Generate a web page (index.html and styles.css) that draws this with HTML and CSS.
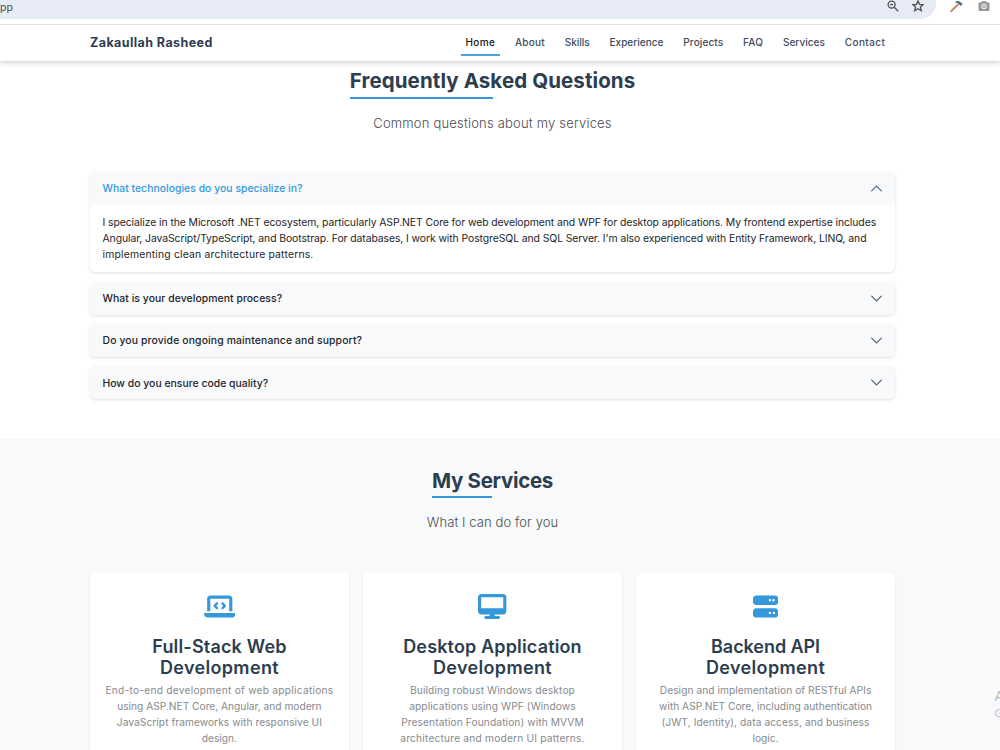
FILE: index.html
```
<!DOCTYPE html>
<html lang="en">
<head>
<meta charset="utf-8">
<title>Zakaullah Rasheed</title>
<link rel="stylesheet" href="styles.css">
</head>
<body>
<div class="browser">
  <div class="address"><span class="url">pp</span>
    <svg class="zoom" viewBox="0 0 12 12"><circle cx="4.6" cy="4.6" r="3.5"/><path d="M7.3 7.3 11.2 11.2M3 4.6h3.2"/></svg>
    <svg class="star" viewBox="0 0 12 12"><path d="M6 .9 7.5 4.3 11.2 4.6 8.4 7 9.3 10.7 6 8.7 2.7 10.7 3.6 7 .8 4.6 4.5 4.3Z"/></svg>
  </div>
  <svg class="hammer" viewBox="0 0 13 13"><path class="handle" d="M1.2 11.2 7.6 4.8"/><path class="head" d="M4.8 2.3C6.4.5 9 .5 10.4 1.9l1 1 1.5.6-2 2.6-1.2-.9L7.7 3.5C6.9 2.8 6.2 2.5 4.8 2.3Z"/></svg>
  <svg class="camera" viewBox="0 0 12 12"><path d="M1.3 2.4h1.9L4.1 1h3.8l.9 1.4h1.9q.8 0 .8.8v6.9q0 .8-.8.8H1.3q-.8 0-.8-.8V3.2q0-.8.8-.8Z"/><circle class="ring" cx="6" cy="6.4" r="2.3"/><circle class="lens" cx="6" cy="6.4" r=".8"/></svg>
</div>
<nav class="navbar">
  <div class="container nav-row">
    <a class="brand">Zakaullah Rasheed</a>
    <div class="links">
      <a class="link active n-home">Home</a><a class="link n-about">About</a><a class="link">Skills</a><a class="link n-exp">Experience</a><a class="link n-proj">Projects</a><a class="link n-faq">FAQ</a><a class="link n-serv">Services</a><a class="link n-contact">Contact</a>
    </div>
  </div>
</nav>
<section class="faq">
  <div class="container">
    <div class="section-head">
      <h2 class="h-faq">Frequently Asked Questions</h2>
      <p class="sub-faq">Common questions about my services</p>
    </div>
    <div class="accordion">
      <div class="item">
        <div class="question open"><span class="q1">What technologies do you specialize in?</span><svg class="chevron" viewBox="0 0 16 16"><path d="M2 11 8 5l6 6"/></svg></div>
        <div class="answer"><span class="line a1">I specialize in the Microsoft .NET ecosystem, particularly ASP.NET Core for web development and WPF for desktop applications. My frontend expertise includes</span> <span class="line a2">Angular, JavaScript/TypeScript, and Bootstrap. For databases, I work with PostgreSQL and SQL Server. I'm also experienced with Entity Framework, LINQ, and</span> <span class="line a3">implementing clean architecture patterns.</span></div>
      </div>
      <div class="item"><div class="question"><span class="q2">What is your development process?</span><svg class="chevron" viewBox="0 0 16 16"><path d="M2 5l6 6 6-6"/></svg></div></div>
      <div class="item"><div class="question"><span class="q3">Do you provide ongoing maintenance and support?</span><svg class="chevron" viewBox="0 0 16 16"><path d="M2 5l6 6 6-6"/></svg></div></div>
      <div class="item"><div class="question"><span class="q4">How do you ensure code quality?</span><svg class="chevron" viewBox="0 0 16 16"><path d="M2 5l6 6 6-6"/></svg></div></div>
    </div>
  </div>
</section>
<section class="services">
  <div class="container">
    <div class="section-head">
      <h2 class="h-serv">My Services</h2>
      <p class="sub-serv">What I can do for you</p>
    </div>
    <div class="cards">
      <div class="card">
        <svg class="icon" viewBox="0 0 640 512" width="31.5" height="25.2"><path d="M64 96c0-35.3 28.7-64 64-64H512c35.3 0 64 28.7 64 64V352H512V96H128V352H64V96zM0 403.2C0 392.6 8.6 384 19.2 384H620.8c10.6 0 19.2 8.6 19.2 19.2c0 42.4-34.4 76.8-76.8 76.8H76.8C34.4 480 0 445.6 0 403.2zM281 209l-31 31 31 31c9.4 9.4 9.4 24.6 0 33.9s-24.6 9.4-33.9 0l-48-48c-9.4-9.4-9.4-24.6 0-33.9l48-48c9.4-9.4 24.6-9.4 33.9 0s9.4 24.6 0 33.9zM393 175l48 48c9.4 9.4 9.4 24.6 0 33.9l-48 48c-9.4 9.4-24.6 9.4-33.9 0s-9.4-24.6 0-33.9l31-31-31-31c-9.4-9.4-9.4-24.6 0-33.9s24.6-9.4 33.9 0z"/></svg>
        <h3><span class="line t1">Full-Stack Web</span> <span class="line t2">Development</span></h3>
        <p><span class="line c1">End-to-end development of web applications</span> <span class="line">using ASP.NET Core, Angular, and modern</span> <span class="line c3">JavaScript frameworks with responsive UI</span> <span class="line">design.</span></p>
      </div>
      <div class="card">
        <svg class="icon" viewBox="0 0 576 512" width="28.4" height="25.2"><path d="M64 0C28.7 0 0 28.7 0 64V352c0 35.3 28.7 64 64 64H240l-10.7 32H160c-17.7 0-32 14.3-32 32s14.3 32 32 32H416c17.7 0 32-14.3 32-32s-14.3-32-32-32H346.7L336 416H512c35.3 0 64-28.7 64-64V64c0-35.3-28.7-64-64-64H64zM512 64V288H64V64H512z"/></svg>
        <h3><span class="line t3">Desktop Application</span> <span class="line t2">Development</span></h3>
        <p><span class="line c4">Building robust Windows desktop</span> <span class="line c5">applications using WPF (Windows</span> <span class="line c5">Presentation Foundation) with MVVM</span> <span class="line c6">architecture and modern UI patterns.</span></p>
      </div>
      <div class="card">
        <svg class="icon" viewBox="0 0 512 512" width="25.2" height="25.2"><path fill-rule="evenodd" d="M64 32C28.7 32 0 60.7 0 96v64c0 35.3 28.7 64 64 64H448c35.3 0 64-28.7 64-64V96c0-35.3-28.7-64-64-64H64zm280 72a24 24 0 1 1 0 48 24 24 0 1 1 0-48zm48 24a24 24 0 1 1 48 0 24 24 0 1 1 -48 0zM64 288c-35.3 0-64 28.7-64 64v64c0 35.3 28.7 64 64 64H448c35.3 0 64-28.7 64-64V352c0-35.3-28.7-64-64-64H64zm280 72a24 24 0 1 1 0 48 24 24 0 1 1 0-48zm56 24a24 24 0 1 1 48 0 24 24 0 1 1 -48 0z"/></svg>
        <h3><span class="line t4">Backend API</span> <span class="line t2">Development</span></h3>
        <p><span class="line c3">Design and implementation of RESTful APIs</span> <span class="line">with ASP.NET Core, including authentication</span> <span class="line c7">(JWT, Identity), data access, and business</span> <span class="line">logic.</span></p>
      </div>
    </div>
  </div>
</section>
<div class="watermark"><div class="mark-title">A</div><div class="mark-text">G</div></div>
</body>
</html>
```
FILE: styles.css
```
* { box-sizing: border-box; }
body { margin: 0; height: 750px; overflow: hidden; position: relative; background: #fff; color: #212529; font-family: Inter, "Open Sans", sans-serif; }
h2, h3, p { margin: 0; }
svg { display: block; flex: none; }
.container { width: 805px; margin-left: 90px; }
.line { display: block; white-space: nowrap; }

/* browser strip */
.browser { height: 25px; display: flex; border-bottom: 1px solid #e1e1e1; background: #fff; }
.address { width: 936px; height: 19px; display: flex; background: #e7ebf5; border-radius: 0 0 16px 0; color: #55585c; }
.url { font: 11.5px/14px Roboto, sans-serif; width: 887px; }
.zoom, .star { width: 12px; height: 12px; fill: none; stroke: #4b4e52; stroke-width: 1.3; }
.star { margin-left: 13px; }
.hammer { width: 13px; height: 13px; margin-left: 14px; }
.handle { stroke: #c98055; stroke-width: 1.9; stroke-linecap: round; }
.head { fill: #557080; }
.camera { width: 12px; height: 12px; margin-left: 15px; fill: #989898; }
.ring { fill: none; stroke: #fff; stroke-width: 1; }
.lens { fill: #fff; }

/* site navigation */
.navbar { height: 36px; position: relative; background: #fff; box-shadow: 0 1px 6px rgba(0,0,0,.24); clip-path: inset(0 0 -12px 0); }
.nav-row { height: 36px; display: flex; justify-content: space-between; }
.brand { font-size: 12.5px; font-weight: 700; line-height: 35px; letter-spacing: .42px; color: #2c3e50; white-space: nowrap; }
.links { display: flex; gap: 9.8px; margin-right: 4.8px; }
.link { height: 31px; padding: 0 5px; font-size: 10px; font-weight: 500; line-height: 35px; color: #3c4c5e; white-space: nowrap; }
.active { color: #17191b; border-bottom: 2px solid #4da3dd; }
.n-home { letter-spacing: .33px; }
.n-about { letter-spacing: .25px; }
.n-exp { letter-spacing: .03px; }
.n-proj { letter-spacing: .125px; }
.n-faq { letter-spacing: .2px; }
.n-serv { letter-spacing: .043px; }
.n-contact { letter-spacing: .4px; }

/* section headings */
.section-head { display: flex; flex-direction: column; align-items: center; }
h2 { height: 34px; position: relative; font-size: 20.5px; font-weight: 700; line-height: 31px; color: #2c3e50; white-space: nowrap; }
h2::after { content: ""; position: absolute; left: 0; bottom: 0; width: 50%; height: 2px; background: #3498db; }
.section-head p { margin-top: 14px; font-size: 13px; font-weight: 300; line-height: 20px; color: #4a4d50; white-space: nowrap; }
.h-faq { letter-spacing: .092px; }
.h-serv { letter-spacing: -.31px; line-height: 33px; }
.sub-faq { letter-spacing: .191px; }
.sub-serv { letter-spacing: .094px; }

/* accordion */
.faq { height: 378px; padding-top: 4px; }
.accordion { display: flex; flex-direction: column; gap: 9.4px; margin-top: 39.3px; }
.item { background: #fff; border-radius: 5px; box-shadow: 0 1px 3px rgba(0,0,0,.13); overflow: hidden; }
.question { height: 32.8px; padding: 0 12.5px; display: flex; align-items: center; justify-content: space-between; background: #f8f9fb; font-size: 10.4px; font-weight: 500; color: #212529; }
.question.open { color: #3498db; }
.chevron { width: 13px; height: 13px; fill: none; stroke: #4f5357; stroke-width: 1.3; stroke-linecap: round; stroke-linejoin: round; }
.open .chevron { stroke: #3f628f; }
.answer { height: 67.3px; padding: 9.7px 12.5px 0; font-size: 10.4px; line-height: 16px; }
.q1 { letter-spacing: .029px; }
.q2 { letter-spacing: .062px; }
.q3 { letter-spacing: .132px; }
.q4 { letter-spacing: .015px; padding-top: 1px; }
.a1 { letter-spacing: -.075px; }
.a2 { letter-spacing: -.083px; }
.a3 { letter-spacing: .173px; }

/* service cards */
.services { height: 311px; padding-top: 25px; background: #f8f9fb; }
.cards { display: grid; grid-template-columns: repeat(3, 1fr); gap: 14.2px; margin-top: 41px; }
.card { height: 200px; padding-top: 20.7px; display: flex; flex-direction: column; align-items: center; text-align: center; background: #fff; border-radius: 5px; box-shadow: 0 1px 3px rgba(0,0,0,.07); }
.icon { fill: #3498db; }
h3 { margin-top: 17px; font-size: 18px; font-weight: 600; line-height: 21.2px; color: #2c3e50; }
.card p { margin-top: 4.5px; font-size: 10.2px; line-height: 15.9px; color: #858a8e; }
.t1 { letter-spacing: .18px; }
.t2 { letter-spacing: .34px; }
.t3 { letter-spacing: .15px; }
.t4 { letter-spacing: -.06px; }
.c1 { letter-spacing: .25px; }
.c3 { letter-spacing: .056px; }
.c4 { letter-spacing: .127px; }
.c5 { letter-spacing: .1px; }
.c6 { letter-spacing: .2px; }
.c7 { letter-spacing: .082px; }

/* desktop watermark running off the right edge */
.watermark { position: absolute; left: 994.5px; top: 685px; width: 5.5px; overflow: hidden; white-space: nowrap; color: #b9bbbe; font-family: "Open Sans", sans-serif; }
.mark-title { font-size: 15px; line-height: 20px; }
.mark-text { font-size: 11.5px; line-height: 15px; }
```
